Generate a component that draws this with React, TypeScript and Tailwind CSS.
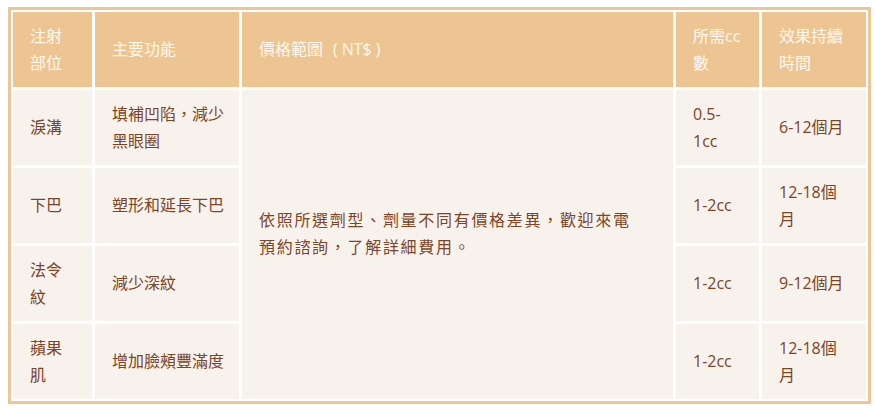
import React from "react";

const font = { fontFamily: '"Open Sans", "Noto Sans CJK TC", sans-serif' };

function H({ children }: { children: React.ReactNode }) {
  return (
    <div className="bg-[#ecc592] text-[#fff9f0] flex items-center pl-[17px] pr-2 whitespace-nowrap">
      <div>{children}</div>
    </div>
  );
}

function C({ children }: { children: React.ReactNode }) {
  return (
    <div className="bg-[#f8f2ec] text-[#7c4528] flex items-center pl-[17px] pr-2 whitespace-nowrap">
      <div>{children}</div>
    </div>
  );
}

export default function App() {
  return (
    <div className="bg-white w-[875px] h-[412px] pt-[7px] pl-[8px]" style={font}>
      <div className="inline-block border-[3px] border-[#ebc796] p-[2px] bg-white">
        <div className="grid grid-cols-[79px_144px_431px_83px_104px] grid-rows-[75px_75px_75px_75px_75px] gap-[3px] text-[16px] leading-[27px]">
          <H>注射<br />部位</H>
          <H>主要功能</H>
          <H>價格範圍<span className="ml-[10px]">(</span><span className="ml-[4px]">NT$</span><span className="ml-[4px]">)</span></H>
          <H>所需cc<br />數</H>
          <H>效果持續<br />時間</H>

          <C>淚溝</C>
          <C>填補凹陷，減少<br />黑眼圈</C>
          <div className="row-span-4 bg-[#f8f2ec] text-[#7c4528] flex items-center pl-[17px] pb-[22px] whitespace-nowrap tracking-[1.7px]">
            <div>依照所選劑型、劑量不同有價格差異，歡迎來電<br />預約諮詢，了解詳細費用。</div>
          </div>
          <C>0.5-<br />1cc</C>
          <C>6-12個月</C>

          <C>下巴</C>
          <C>塑形和延長下巴</C>
          <C>1-2cc</C>
          <C>12-18個<br />月</C>

          <C>法令<br />紋</C>
          <C>減少深紋</C>
          <C>1-2cc</C>
          <C>9-12個月</C>

          <C>蘋果<br />肌</C>
          <C>增加臉頰豐滿度</C>
          <C>1-2cc</C>
          <C>12-18個<br />月</C>
        </div>
      </div>
    </div>
  );
}
